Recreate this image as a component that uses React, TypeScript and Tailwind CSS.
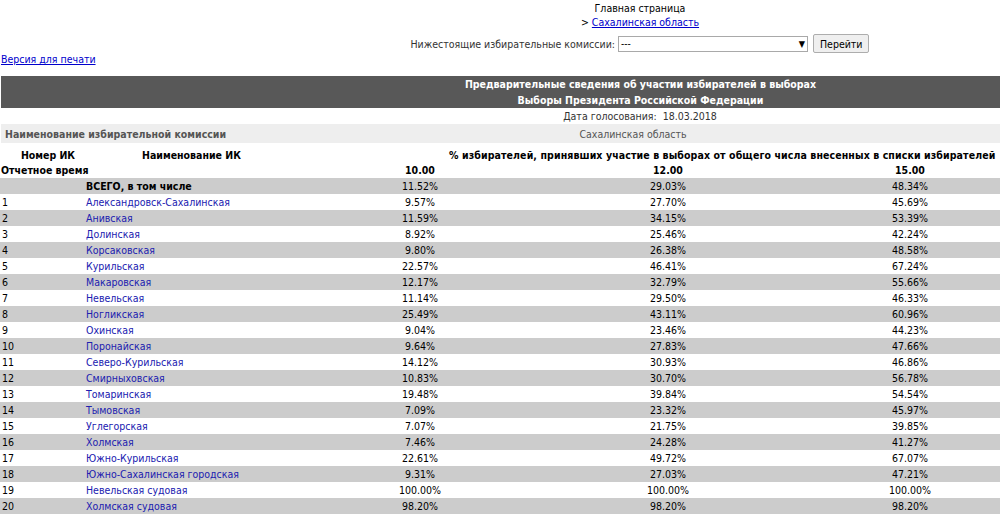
import React from "react";

const rows: [string, string, string, string, string][] = [
  ["1", "Александровск-Сахалинская", "9.57%", "27.70%", "45.69%"],
  ["2", "Анивская", "11.59%", "34.15%", "53.39%"],
  ["3", "Долинская", "8.92%", "25.46%", "42.24%"],
  ["4", "Корсаковская", "9.80%", "26.38%", "48.58%"],
  ["5", "Курильская", "22.57%", "46.41%", "67.24%"],
  ["6", "Макаровская", "12.17%", "32.79%", "55.66%"],
  ["7", "Невельская", "11.14%", "29.50%", "46.33%"],
  ["8", "Ногликская", "25.49%", "43.11%", "60.96%"],
  ["9", "Охинская", "9.04%", "23.46%", "44.23%"],
  ["10", "Поронайская", "9.64%", "27.83%", "47.66%"],
  ["11", "Северо-Курильская", "14.12%", "30.93%", "46.86%"],
  ["12", "Смирныховская", "10.83%", "30.70%", "56.78%"],
  ["13", "Томаринская", "19.48%", "39.84%", "54.54%"],
  ["14", "Тымовская", "7.09%", "23.32%", "45.97%"],
  ["15", "Углегорская", "7.07%", "21.75%", "39.85%"],
  ["16", "Холмская", "7.46%", "24.28%", "41.27%"],
  ["17", "Южно-Курильская", "22.61%", "49.72%", "67.07%"],
  ["18", "Южно-Сахалинская городская", "9.31%", "27.03%", "47.21%"],
  ["19", "Невельская судовая", "100.00%", "100.00%", "100.00%"],
  ["20", "Холмская судовая", "98.20%", "98.20%", "98.20%"],
];

export default function App() {
  return (
    <div className="w-[1000px] h-[529px] overflow-hidden bg-white text-black font-['DejaVu_Sans_Condensed','DejaVu_Sans',Verdana,sans-serif] text-[10.5px] leading-[14px]">
      <div className="w-[1280px]">
        {/* Top navigation */}
        <div className="flex flex-col items-center pt-[1px]">
          <div>Главная страница</div>
          <div>
            &gt; <a href="#" className="text-[#0000cc] underline">Сахалинская область</a>
          </div>
          <div className="flex items-center gap-[3px] mt-[5px]">
            <span className="text-[#333]">Нижестоящие избирательные комиссии:</span>
            <div className="w-[190px] h-[16px] border border-[#a9a9a9] flex items-center justify-between px-[2px] text-[10px]">
              <span>---</span>
              <span className="text-[9px]">▼</span>
            </div>
            <button className="ml-[2px] h-[19px] px-[6px] border border-[#adadad] rounded-[2px] bg-[#efefef] text-[10.5px]">
              Перейти
            </button>
          </div>
        </div>
        <div className="pl-[1px] -mt-[1px]">
          <a href="#" className="text-[#0000cc] underline">Версия для печати</a>
        </div>

        {/* Header block */}
        <div className="mt-[10px] ml-[1px] bg-[#585858] text-white font-bold text-center leading-[16px]">
          <div>Предварительные сведения об участии избирателей в выборах</div>
          <div>Выборы Президента Российской Федерации</div>
        </div>
        <div className="text-center text-[#333] leading-[16px]">Дата голосования:&nbsp; 18.03.2018</div>
        <div className="flex items-center h-[19px] bg-[#eeeeee] ml-[1px]">
          <div className="w-[460px] pl-[4px] font-bold text-[#555]">Наименование избирательной комиссии</div>
          <div className="w-[344px] text-center text-[#555]">Сахалинская область</div>
        </div>

        {/* Data table */}
        <table className="table-fixed border-collapse w-[1280px] mt-[4px]">
          <colgroup>
            <col className="w-[84px]" />
            <col className="w-[215px]" />
            <col className="w-[242px]" />
            <col className="w-[254px]" />
            <col className="w-[230px]" />
            <col className="w-[255px]" />
          </colgroup>
          <thead>
            <tr className="h-[15px] font-bold">
              <td className="text-center pl-[12px]">Номер ИК</td>
              <td className="text-center">Наименование ИК</td>
              <td colSpan={4} className="text-left pl-[150px] whitespace-nowrap tracking-[0.1px]">
                % избирателей, принявших участие в выборах от общего числа внесенных в списки избирателей
              </td>
            </tr>
            <tr className="h-[16px] font-bold">
              <td colSpan={2} className="pl-[1px]">Отчетное время</td>
              <td className="text-center">10.00</td>
              <td className="text-center">12.00</td>
              <td className="text-center">15.00</td>
              <td></td>
            </tr>
          </thead>
          <tbody>
            <tr className="h-[16px] bg-[#cccccc]">
              <td></td>
              <td className="pl-[2px] font-bold">ВСЕГО, в том числе</td>
              <td className="text-center">11.52%</td>
              <td className="text-center">29.03%</td>
              <td className="text-center">48.34%</td>
              <td></td>
            </tr>
            {rows.map((r, i) => (
              <tr key={r[0]} className={i % 2 === 1 ? "h-[16px] bg-[#cccccc]" : "h-[16px] bg-white"}>
                <td className="pl-[2px]">{r[0]}</td>
                <td className="pl-[2px]">
                  <a href="#" className="text-[#2020b0]">{r[1]}</a>
                </td>
                <td className="text-center">{r[2]}</td>
                <td className="text-center">{r[3]}</td>
                <td className="text-center">{r[4]}</td>
                <td></td>
              </tr>
            ))}
          </tbody>
        </table>
      </div>
    </div>
  );
}
